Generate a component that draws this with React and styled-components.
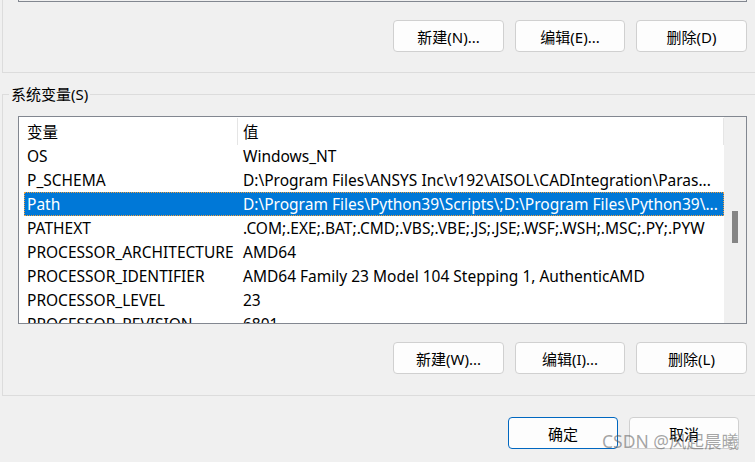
import React from 'react';
import styled, { createGlobalStyle } from 'styled-components';

const GlobalStyle = createGlobalStyle`
  html, body {
    margin: 0;
    padding: 0;
    background: #f0f0f0;
  }
  body {
    font-family: "Noto Sans", "Noto Sans CJK SC", sans-serif;
    font-size: 15.5px;
    color: #000;
  }
`;

const Window = styled.div`
  position: relative;
  width: 755px;
  height: 462px;
  overflow: hidden;
  background: #f0f0f0;
  display: flex;
  flex-direction: column;
`;

const UserGroup = styled.section`
  box-sizing: border-box;
  height: 73px;
  margin-left: 2px;
  padding: 0 8px 0 15px;
  border-left: 1px solid #dcdcdc;
  border-bottom: 1px solid #dcdcdc;
  display: flex;
  flex-direction: column;
`;

const ListStub = styled.div`
  box-sizing: border-box;
  height: 2px;
  border: 1px solid #828790;
  border-top: none;
`;

const ButtonRow = styled.div`
  display: flex;
  justify-content: flex-end;
  gap: 11px;
  margin-top: ${p => p.$top || 0}px;
  padding-right: ${p => p.$right || 0}px;
`;

const Button = styled.button`
  box-sizing: border-box;
  width: ${p => p.$w || 111}px;
  height: 32px;
  padding: 0;
  border: 1px solid ${p => (p.$primary ? '#0067c0' : '#d0d0d0')};
  border-radius: 4px;
  background: #fdfdfd;
  font-family: inherit;
  font-size: 15px;
  color: #000;
`;

const SystemGroup = styled.fieldset`
  margin: 11px 0 0 2px;
  padding: 12px 8px 21px 0;
  border: 1px solid #dcdcdc;
  border-right: none;
  min-width: 0;
`;

const Legend = styled.legend`
  margin-left: 6px;
  padding: 0 2px;
  line-height: 20px;
  font-size: 15px;
`;

const GroupBody = styled.div`
  margin-left: 15px;
  display: flex;
  flex-direction: column;
`;

const ListView = styled.div`
  box-sizing: border-box;
  height: 208px;
  border: 1px solid #828790;
  background: #fff;
  display: grid;
  grid-template-columns: 1fr 22px;
  overflow: hidden;
`;

const ListBody = styled.div`
  overflow: hidden;
  white-space: nowrap;
`;

const HeaderRow = styled.div`
  display: grid;
  grid-template-columns: 219px 1fr;
  height: 27px;
`;

const HeaderCell = styled.div`
  box-sizing: border-box;
  padding: 1px 0 0 ${p => p.$pad}px;
  line-height: 26px;
  border-right: 1px solid #e5e5e5;
  margin-top: 1px;
`;

const Row = styled.div`
  display: grid;
  grid-template-columns: 213px 1fr;
  height: 24px;
  margin-left: 5px;
  line-height: 24px;
  background: ${p => (p.$selected ? '#0078d7' : 'transparent')};
  color: ${p => (p.$selected ? '#fff' : '#000')};
  outline: ${p => (p.$selected ? '1px dotted #f2a03c' : 'none')};
  outline-offset: -1px;
`;

const Cell = styled.div`
  padding-left: ${p => p.$pad}px;
  overflow: hidden;
`;

const ScrollTrack = styled.div`
  background: #f0f0f0;
  padding: 94px 0 0 8px;
`;

const ScrollThumb = styled.div`
  width: 6px;
  height: 32px;
  background: #858585;
`;

const Footer = styled.div`
  margin-top: 21px;
`;

const Watermark = styled.div`
  position: absolute;
  right: 16px;
  bottom: 9px;
  font-family: "Noto Sans", "Noto Sans CJK SC", sans-serif;
  font-size: 17.5px;
  color: rgba(90, 90, 90, 0.55);
  pointer-events: none;
`;

const rows = [
  ['OS', 'Windows_NT'],
  ['P_SCHEMA', 'D:\\Program Files\\ANSYS Inc\\v192\\AISOL\\CADIntegration\\Paras...'],
  ['Path', 'D:\\Program Files\\Python39\\Scripts\\;D:\\Program Files\\Python39\\...'],
  ['PATHEXT', '.COM;.EXE;.BAT;.CMD;.VBS;.VBE;.JS;.JSE;.WSF;.WSH;.MSC;.PY;.PYW'],
  ['PROCESSOR_ARCHITECTURE', 'AMD64'],
  ['PROCESSOR_IDENTIFIER', 'AMD64 Family 23 Model 104 Stepping 1, AuthenticAMD'],
  ['PROCESSOR_LEVEL', '23'],
  ['PROCESSOR_REVISION', '6801'],
];

export default function App() {
  return (
    <Window>
      <GlobalStyle />
      <UserGroup>
        <ListStub />
        <ButtonRow $top={18}>
          <Button>新建(N)...</Button>
          <Button $w={110}>编辑(E)...</Button>
          <Button>删除(D)</Button>
        </ButtonRow>
      </UserGroup>

      <SystemGroup>
        <Legend>系统变量(S)</Legend>
        <GroupBody>
          <ListView>
            <ListBody>
              <HeaderRow>
                <HeaderCell $pad={8}>变量</HeaderCell>
                <HeaderCell $pad={5}>值</HeaderCell>
              </HeaderRow>
              {rows.map(([name, value]) => (
                <Row key={name} $selected={name === 'Path'}>
                  <Cell $pad={3}>{name}</Cell>
                  <Cell $pad={6}>{value}</Cell>
                </Row>
              ))}
            </ListBody>
            <ScrollTrack>
              <ScrollThumb />
            </ScrollTrack>
          </ListView>
          <ButtonRow $top={18}>
            <Button>新建(W)...</Button>
            <Button $w={110}>编辑(I)...</Button>
            <Button>删除(L)</Button>
          </ButtonRow>
        </GroupBody>
      </SystemGroup>

      <Footer>
        <ButtonRow $right={16}>
          <Button $w={110} $primary>确定</Button>
          <Button $w={110}>取消</Button>
        </ButtonRow>
      </Footer>

      <Watermark>CSDN @风起晨曦</Watermark>
    </Window>
  );
}
